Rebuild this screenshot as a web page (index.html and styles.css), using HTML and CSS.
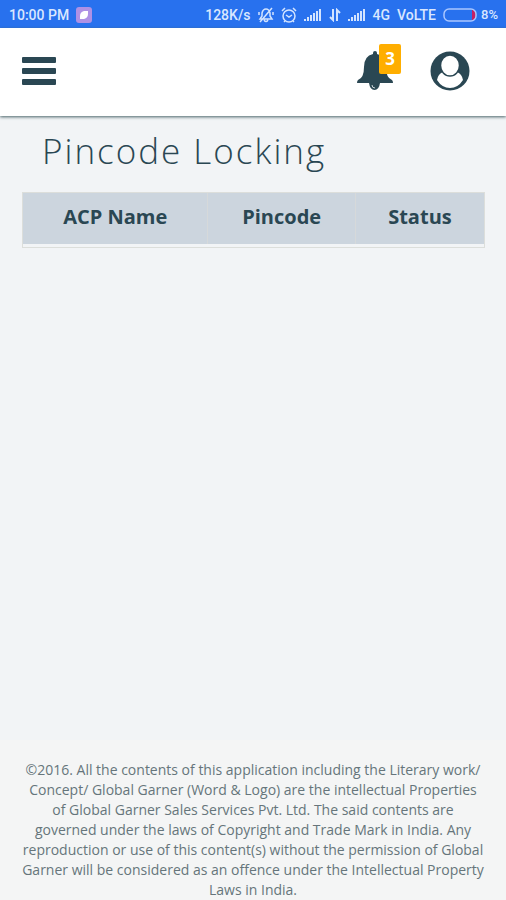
FILE: index.html
```html
<!DOCTYPE html>
<html lang="en">
<head>
<meta charset="utf-8">
<meta name="viewport" content="width=device-width, initial-scale=1">
<title>Pincode Locking</title>
<link rel="stylesheet" href="styles.css">
</head>
<body>
<div class="status">
  <span>10:00 PM</span>
  <svg class="app" width="16" height="16" viewBox="0 0 16 16"><rect width="16" height="16" rx="3" fill="#ae91e5"/><path d="M4 12V9q0-4 4-5h4v3q0 4-4 5z" fill="#fff"/></svg>
  <div class="indicators">
    <span>128K/s</span>
    <svg width="16" height="16" viewBox="0 0 16 16" fill="none" stroke="#d3e4ff" stroke-width="1.500"><path d="M2 12h12l-2-3V6q-1-4-4-4T4 6v3zM6 13q2 3 4 0M2 15 14 1M1 5v3M15 5v3"/></svg>
    <svg width="16" height="16" viewBox="0 0 16 16" fill="none" stroke="#d3e4ff" stroke-width="1.500"><circle cx="8" cy="9" r="6"/><path d="M1 4l3-3M15 4l-3-3M5 8l3 2 3-2M4 14l-1 1M12 14l1 1"/></svg>
    <svg width="18" height="14" viewBox="0 0 18 14" fill="#d3e4ff"><path d="M0 11h2v2H0zM3 9h2v4H3zM6 7h2v6H6zM9 5h2v8H9zM12 3h2v10h-2zM15 1h2v12h-2z"/></svg>
    <svg width="12" height="14" viewBox="0 0 12 14" fill="none" stroke="#d3e4ff" stroke-width="2"><path d="M4 1v11L1 9M8 13V2l3 3"/></svg>
    <svg width="18" height="14" viewBox="0 0 18 14" fill="#d3e4ff"><path d="M0 11h2v2H0zM3 9h2v4H3zM6 7h2v6H6zM9 5h2v8H9zM12 3h2v10h-2zM15 1h2v12h-2z"/></svg>
    <span>4G</span>
    <span>VoLTE</span>
    <div class="battery">
      <svg width="34" height="14" viewBox="0 0 34 14"><path d="M29 2h1q3 1 3 5t-3 5h-1z" fill="#c51f63"/><rect x="1" y="1" width="32" height="12" rx="5" fill="none" stroke="#a9c6ff" stroke-width="1.500"/></svg>
      <span>8%</span>
    </div>
  </div>
</div>
<header class="bar">
  <button class="icon" aria-label="Menu">
    <svg width="34" height="30" viewBox="0 0 34 30" fill="#2a4753"><rect y="1" width="34" height="6" rx="1"/><rect y="12" width="34" height="6" rx="1"/><rect y="23" width="34" height="6" rx="1"/></svg>
  </button>
  <div class="actions">
    <button class="icon" aria-label="Notifications">
      <svg width="36" height="40" viewBox="0 0 36 40" fill="#2a4753"><path d="M16 2q0-2 2-2t2 2v1q9 2 9 13 0 11 6 13 1 1 1 3H0q0-2 1-3 6-2 6-13Q7 5 16 3z"/><path d="M12 32h11q-1 7-5.500 7T12 32z"/><path d="M15 34q0 3 3 3" fill="none" stroke="#c9d3d6"/></svg>
      <span class="badge">3</span>
    </button>
    <button class="icon" aria-label="Profile">
      <svg width="40" height="40" viewBox="0 0 40 40"><circle cx="20" cy="20" r="19.500" fill="#2a4753"/><path d="M7 29q1-6 6-8 7 5 14 0 5 2 6 8-5 8-13 8T7 29z" fill="#fff"/><ellipse cx="20" cy="14.500" rx="9.500" ry="10.500" fill="#fff" stroke="#2a4753" stroke-width="1.500"/></svg>
    </button>
  </div>
</header>
<main>
  <h1>Pincode Locking</h1>
  <table>
    <thead><tr><th scope="col" class="name">ACP Name</th><th scope="col" class="pin">Pincode</th><th scope="col">Status</th></tr></thead>
    <tbody><tr><td colspan="3"></td></tr></tbody>
  </table>
</main>
<footer>©2016. All the contents of this application including the Literary work/ Concept/ Global Garner (Word &amp; Logo) are the intellectual Properties of Global Garner Sales Services Pvt. Ltd. The said contents are governed under the laws of Copyright and Trade Mark in India. Any reproduction or use of this content(s) without the permission of Global Garner will be considered as an offence under the Intellectual Property Laws in India.</footer>
</body>
</html>
```
FILE: styles.css
```css
* { box-sizing: border-box; }
body {
  margin: 0;
  min-height: 100vh;
  display: flex;
  flex-direction: column;
  background: #f2f4f6;
  color: #2a4753;
  font-family: "Open Sans", sans-serif;
}
svg { display: block; flex: none; }
.status {
  display: flex;
  align-items: center;
  height: 28px;
  padding: 2px 8px 0 9px;
  background: #2871ee;
  color: #d9e7ff;
  font: 500 14px/20px Roboto, sans-serif;
  white-space: nowrap;
}
.app { margin-left: 7px; }
.indicators {
  display: flex;
  align-items: center;
  gap: 7px;
  margin-left: auto;
}
.battery {
  display: flex;
  align-items: center;
  gap: 4px;
  font-size: 13px;
}
.bar {
  display: flex;
  align-items: center;
  justify-content: space-between;
  height: 88px;
  padding: 0 36px 2px 22px;
  background: #fff;
  box-shadow: 0 1px 3px #456066;
}
.icon {
  position: relative;
  padding: 0;
  border: 0;
  background: none;
}
.actions { display: flex; gap: 37px; }
.badge {
  position: absolute;
  top: -7px;
  left: 22px;
  width: 22px;
  border-radius: 2px;
  background: #ffae00;
  color: #fff;
  font: 700 17px/30px "Open Sans", sans-serif;
  text-align: center;
}
main { flex: 1; padding: 11px 21px 0 22px; }
h1 {
  margin: 0 0 17px;
  padding-left: 20px;
  font-size: 35px;
  font-weight: 300;
  line-height: 48px;
  letter-spacing: 2px;
}
table {
  width: 100%;
  border: 1px solid #dcdedb;
  border-spacing: 0;
  table-layout: fixed;
}
th {
  height: 51px;
  padding: 0 0 4px;
  background: #ccd5de;
  font-size: 20px;
  font-weight: 700;
  line-height: 28px;
}
th + th { border-left: 1px solid #d6d9da; }
.name { width: 40%; }
.pin { width: 32%; }
td { height: 3px; padding: 0; }
footer {
  padding: 20px 21px 0;
  background: #f4f5f5;
  color: #66757b;
  font-size: 14px;
  line-height: 20px;
  text-align: center;
}
```
